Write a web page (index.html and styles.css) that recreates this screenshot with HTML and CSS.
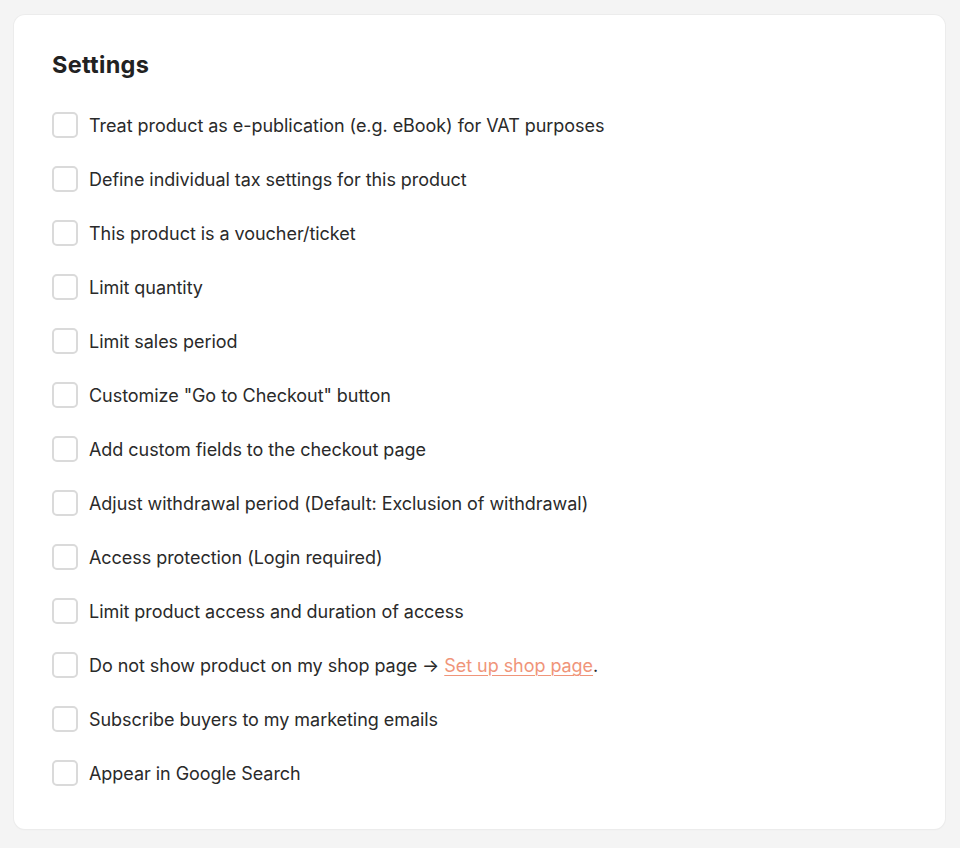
FILE: index.html
```html
<!DOCTYPE html>
<html lang="en">
<head>
<meta charset="utf-8">
<title>Settings</title>
<link rel="stylesheet" href="styles.css">
</head>
<body>
<section class="card">
  <h2 class="title">Settings</h2>
  <ul class="options">
    <li class="option"><span class="box"></span><span class="label">Treat product as e-publication (e.g. eBook) for VAT purposes</span></li>
    <li class="option"><span class="box"></span><span class="label">Define individual tax settings for this product</span></li>
    <li class="option"><span class="box"></span><span class="label">This product is a voucher/ticket</span></li>
    <li class="option"><span class="box"></span><span class="label">Limit quantity</span></li>
    <li class="option"><span class="box"></span><span class="label">Limit sales period</span></li>
    <li class="option"><span class="box"></span><span class="label">Customize "Go to Checkout" button</span></li>
    <li class="option"><span class="box"></span><span class="label">Add custom fields to the checkout page</span></li>
    <li class="option"><span class="box"></span><span class="label">Adjust withdrawal period (Default: Exclusion of withdrawal)</span></li>
    <li class="option"><span class="box"></span><span class="label">Access protection (Login required)</span></li>
    <li class="option"><span class="box"></span><span class="label">Limit product access and duration of access</span></li>
    <li class="option"><span class="box"></span><span class="label">Do not show product on my shop page → <a class="link" href="#">Set up shop page</a>.</span></li>
    <li class="option"><span class="box"></span><span class="label">Subscribe buyers to my marketing emails</span></li>
    <li class="option"><span class="box"></span><span class="label">Appear in Google Search</span></li>
  </ul>
</section>
</body>
</html>
```

FILE: styles.css
```css
html, body {
  margin: 0;
  padding: 0;
}
body {
  background: #f4f4f4;
  font-family: Inter, "Noto Sans", sans-serif;
  color: #262626;
  padding: 15px 15px 19px 14px;
}
.card {
  background: #ffffff;
  border-radius: 11px;
  box-shadow: 0 0 0 1px #ececec, 0 1px 2px rgba(0,0,0,0.04);
  padding: 36px 38px 43px 38px;
  height: 814px;
  box-sizing: border-box;
}
.title {
  margin: 0;
  font-size: 23.5px;
  line-height: 28px;
  font-weight: 700;
  letter-spacing: 0.3px;
  color: #222222;
}
.options {
  list-style: none;
  margin: 33px 0 0 0;
  padding: 0;
  display: flex;
  flex-direction: column;
  gap: 28px;
}
.option {
  display: flex;
  align-items: center;
  gap: 11px;
  height: 26px;
}
.box {
  width: 26px;
  height: 26px;
  box-sizing: border-box;
  border: 2px solid #dadada;
  border-radius: 5px;
  flex: none;
}
.label {
  font-size: 18px;
  line-height: 26px;
  letter-spacing: -0.05px;
  color: #2a2a2a;
  padding-top: 2px;
}
.link {
  color: #f0957a;
  text-decoration: underline;
  text-underline-offset: 3px;
  text-decoration-thickness: 1px;
}
```
